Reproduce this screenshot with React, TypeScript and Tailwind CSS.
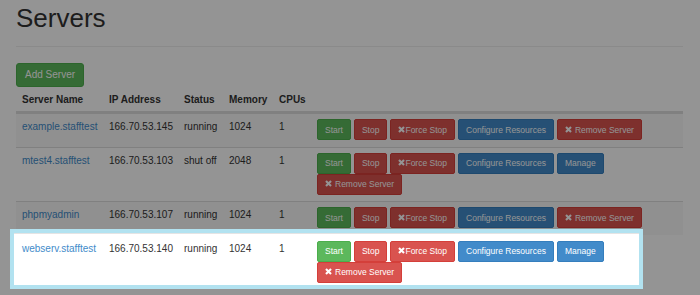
import React from "react";

type Btn = { label: string; kind: "success" | "danger" | "primary"; icon?: "tight" | "space" };

const kindCls: Record<Btn["kind"], string> = {
  success: "bg-[#5cb85c] border-[#4cae4c]",
  danger: "bg-[#d9534f] border-[#d43f3a]",
  primary: "bg-[#428bca] border-[#357ebd]",
};

function XIcon() {
  return (
    <svg width="7" height="7" viewBox="0 0 10 10" className="shrink-0 -mt-[1px]">
      <path d="M1.4 1.4 L8.6 8.6 M8.6 1.4 L1.4 8.6" stroke="currentColor" strokeWidth="3" strokeLinecap="butt" />
    </svg>
  );
}

function SmallButton({ b }: { b: Btn }) {
  return (
    <span
      className={`inline-flex items-center h-[21px] px-[7px] border rounded-[2px] text-white text-[8.5px] leading-[12px] whitespace-nowrap ${kindCls[b.kind]}`}
    >
      {b.icon && <XIcon />}
      {b.icon === "space" && <span className="w-[3px]" />}
      {b.label}
    </span>
  );
}

type Row = { name: string; ip: string; status: string; mem: string; cpus: string; buttons: Btn[] };

const full: Btn[] = [
  { label: "Start", kind: "success" },
  { label: "Stop", kind: "danger" },
  { label: "Force Stop", kind: "danger", icon: "tight" },
  { label: "Configure Resources", kind: "primary" },
];
const remove: Btn = { label: "Remove Server", kind: "danger", icon: "space" };
const manage: Btn = { label: "Manage", kind: "primary" };

const rows: Row[] = [
  { name: "example.stafftest", ip: "166.70.53.145", status: "running", mem: "1024", cpus: "1", buttons: [...full, remove] },
  { name: "mtest4.stafftest", ip: "166.70.53.103", status: "shut off", mem: "2048", cpus: "1", buttons: [...full, manage, remove] },
  { name: "phpmyadmin", ip: "166.70.53.107", status: "running", mem: "1024", cpus: "1", buttons: [...full, remove] },
  { name: "webserv.stafftest", ip: "166.70.53.140", status: "running", mem: "1024", cpus: "1", buttons: [...full, manage, remove] },
];

const grid = "grid grid-cols-[87px_75px_45px_50px_38px_1fr]";

export default function App() {
  return (
    <div
      className="relative min-h-[295px] w-[700px] bg-white text-[#333] overflow-hidden"
      style={{ fontFamily: '"Liberation Sans", Arial, sans-serif' }}
    >
      <div className="pl-[16px] pr-[17px]">
        <div className="pt-[4px] pb-[13px] border-b border-[#eee]">
          <h1 className="text-[26px] leading-[29px] font-normal">Servers</h1>
        </div>
        <div className="pt-[14px]">
          <span className="inline-flex items-center h-[24px] px-[8px] border border-[#4cae4c] bg-[#5cb85c] text-white text-[10px] leading-[14px] rounded-[3px]">
            Add Server
          </span>
        </div>
        <div className="text-[10px] leading-[14px]">
          <div className={`${grid} font-bold border-b-2 border-[#ddd]`}>
            {["Server Name", "IP Address", "Status", "Memory", "CPUs", ""].map((h, i) => (
              <div key={i} className="px-[6px] pt-[6px] pb-[4px]">
                {h}
              </div>
            ))}
          </div>
          {rows.map((r, i) => {
            const last = i === rows.length - 1;
            return (
              <div
                key={r.name}
                className={`${grid} border-t ${last ? "border-transparent relative z-30" : "border-[#ddd]"} ${
                  i % 2 === 0 ? "bg-[#f9f9f9]" : ""
                }`}
              >
                <div className="px-[6px] pt-[6px] pb-[5.5px] text-[#428bca] whitespace-nowrap">{r.name}</div>
                <div className="px-[6px] pt-[6px] pb-[5.5px] whitespace-nowrap">{r.ip}</div>
                <div className="px-[6px] pt-[6px] pb-[5.5px] whitespace-nowrap">{r.status}</div>
                <div className="px-[6px] pt-[6px] pb-[5.5px]">{r.mem}</div>
                <div className="px-[6px] pt-[6px] pb-[5.5px]">{r.cpus}</div>
                <div className="px-[6px] pt-[5px] pb-[6.5px] flex flex-wrap gap-x-[3px]">
                  {r.buttons.map((b, j) => (
                    <SmallButton key={j} b={b} />
                  ))}
                </div>
              </div>
            );
          })}
        </div>
      </div>

      <div className="absolute inset-0 bg-black/[0.42] z-10" />
      <div className="absolute left-[10px] top-[229px] w-[633px] h-[60px] bg-white border-4 border-[#b2e2f0] shadow-[inset_0_1px_0_#e4e4e4] z-20" />
    </div>
  );
}
